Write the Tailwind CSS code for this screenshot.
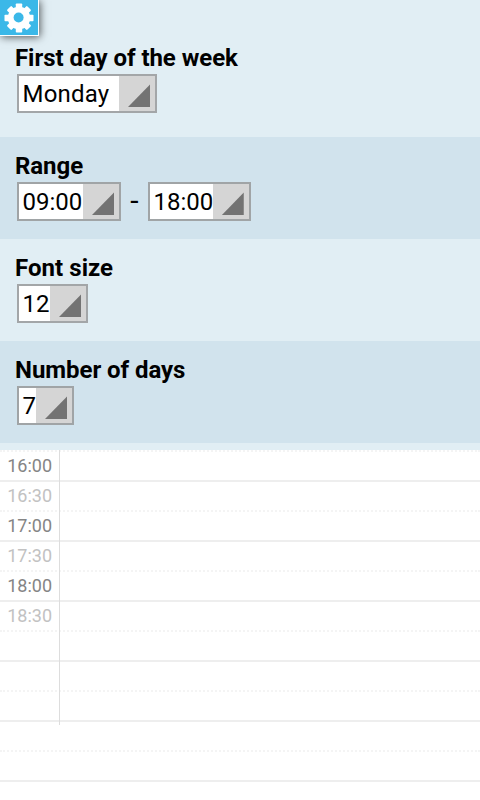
<!DOCTYPE html>
<html lang="en">
<head>
    <meta charset="UTF-8">
    <meta name="viewport" content="width=device-width, initial-scale=1.0">
    <title>Week Calendar</title>
    <script src="https://cdn.jsdelivr.net/npm/@tailwindcss/browser@4"></script>
</head>
<body class="bg-white h-[800px] overflow-hidden font-[Roboto,sans-serif] text-black">
    <!-- Settings toggle -->
    <button id="settings-button" aria-label="Settings" class="absolute left-0 top-0 flex items-start w-[39px] h-9 pl-1 pt-[2.5px] bg-[#3bb8e8] border-r border-b border-white shadow-[1px_1px_8px_rgba(0,0,0,0.65)]">
        <svg class="block size-[30px] shrink-0" viewBox="0 0 30 30">
            <g fill="#fff">
                <circle cx="15" cy="15" r="11.2"/>
                <rect x="11.8" y=".5" width="6.4" height="29" rx=".8"/>
                <rect x="11.8" y=".8" width="6.4" height="28.4" rx="1" transform="rotate(45 15 15)"/>
                <rect x="11.8" y=".5" width="6.4" height="29" rx=".8" transform="rotate(90 15 15)"/>
                <rect x="11.8" y=".8" width="6.4" height="28.4" rx="1" transform="rotate(135 15 15)"/>
            </g>
            <circle cx="14.6" cy="14.5" r="5" fill="#3bb8e8"/>
        </svg>
    </button>

    <!-- Settings panel -->
    <div class="bg-[#e1eef4] h-[450px] text-2xl leading-7">
        <div class="h-[137px] pt-11 pl-[15px]">
            <h2 class="font-bold h-[30px] tracking-[-0.05px]">First day of the week</h2>
            <div class="ml-0.5 flex w-[140px] h-[39px] border-2 border-[#a3a6a8] bg-white">
                <span class="flex-1 pl-[3.5px] pt-[4px] tracking-[0.2px]">Monday</span>
                <svg class="w-9 h-full bg-[#d5d5d5]" viewBox="0 0 36 35"><path d="M9 31 31 8.5V31z" fill="#737373"/></svg>
            </div>
        </div>
        <div class="h-[102px] pt-[15px] pl-[15px] bg-[#d1e3ed]">
            <h2 class="font-bold h-[30px] tracking-[-0.05px]">Range</h2>
            <div class="flex">
                <div class="ml-0.5 flex w-[104px] h-[39px] border-2 border-[#a0a4a6] bg-white">
                    <span class="flex-1 pl-[3.5px] pt-[4px]">09:00</span>
                    <svg class="w-9 h-full bg-[#d5d5d5]" viewBox="0 0 36 35"><path d="M9 31 31 8.5V31z" fill="#737373"/></svg>
                </div>
                <span class="w-[27px] text-center pt-[5px] text-[30px]">-</span>
                <div class="flex w-[103px] h-[39px] border-2 border-[#a0a4a6] bg-white">
                    <span class="flex-1 pl-[3.5px] pt-[4px]">18:00</span>
                    <svg class="w-9 h-full bg-[#d5d5d5]" viewBox="0 0 36 35"><path d="M9 31 31 8.5V31z" fill="#737373"/></svg>
                </div>
            </div>
        </div>
        <div class="h-[102px] pt-[15px] pl-[15px]">
            <h2 class="font-bold h-[30px] tracking-[0.05px]">Font size</h2>
            <div class="ml-0.5 flex w-[71px] h-[39px] border-2 border-[#a3a6a8] bg-white">
                <span class="flex-1 pl-[3.5px] pt-[4px]">12</span>
                <svg class="w-9 h-full bg-[#d5d5d5]" viewBox="0 0 36 35"><path d="M9 31 31 8.5V31z" fill="#737373"/></svg>
            </div>
        </div>
        <div class="h-[102px] pt-[15px] pl-[15px] bg-[#d1e3ed]">
            <h2 class="font-bold h-[30px] tracking-[-0.05px]">Number of days</h2>
            <div class="ml-0.5 flex w-[57px] h-[39px] border-2 border-[#a0a4a6] bg-white">
                <span class="flex-1 pl-[3.5px] pt-[4px]">7</span>
                <svg class="w-9 h-full bg-[#d5d5d5]" viewBox="0 0 36 35"><path d="M9 31 31 8.5V31z" fill="#737373"/></svg>
            </div>
        </div>
    </div>

    <!-- Time grid -->
    <div class="relative text-lg leading-[30px] text-[#858585]">
        <div class="h-[30px] border-t-2 border-dotted border-[#f4f4f4]"><div class="w-[52px] -mt-px text-right">16:00</div></div>
        <div class="h-[30px] border-t-2 border-[#eeeeee]"><div class="w-[52px] -mt-px text-right text-[#c2c2c2]">16:30</div></div>
        <div class="h-[30px] border-t-2 border-dotted border-[#f4f4f4]"><div class="w-[52px] -mt-px text-right">17:00</div></div>
        <div class="h-[30px] border-t-2 border-[#eeeeee]"><div class="w-[52px] -mt-px text-right text-[#c2c2c2]">17:30</div></div>
        <div class="h-[30px] border-t-2 border-dotted border-[#f4f4f4]"><div class="w-[52px] -mt-px text-right">18:00</div></div>
        <div class="h-[30px] border-t-2 border-[#eeeeee]"><div class="w-[52px] -mt-px text-right text-[#c2c2c2]">18:30</div></div>
        <div class="h-[30px] border-t-2 border-dotted border-[#f4f4f4]"></div>
        <div class="h-[30px] border-t-2 border-[#eeeeee]"></div>
        <div class="h-[30px] border-t-2 border-dotted border-[#f4f4f4]"></div>
        <div class="h-[30px] border-t-2 border-[#eeeeee]"></div>
        <div class="h-[30px] border-t-2 border-dotted border-[#f4f4f4]"></div>
        <div class="h-5 border-t-2 border-[#eeeeee]"></div>
        <!-- Time column divider, runs over the row lines -->
        <div class="absolute left-[59px] top-0 w-px h-[275px] bg-[#dddddd]"></div>
    </div>
</body>
</html>
